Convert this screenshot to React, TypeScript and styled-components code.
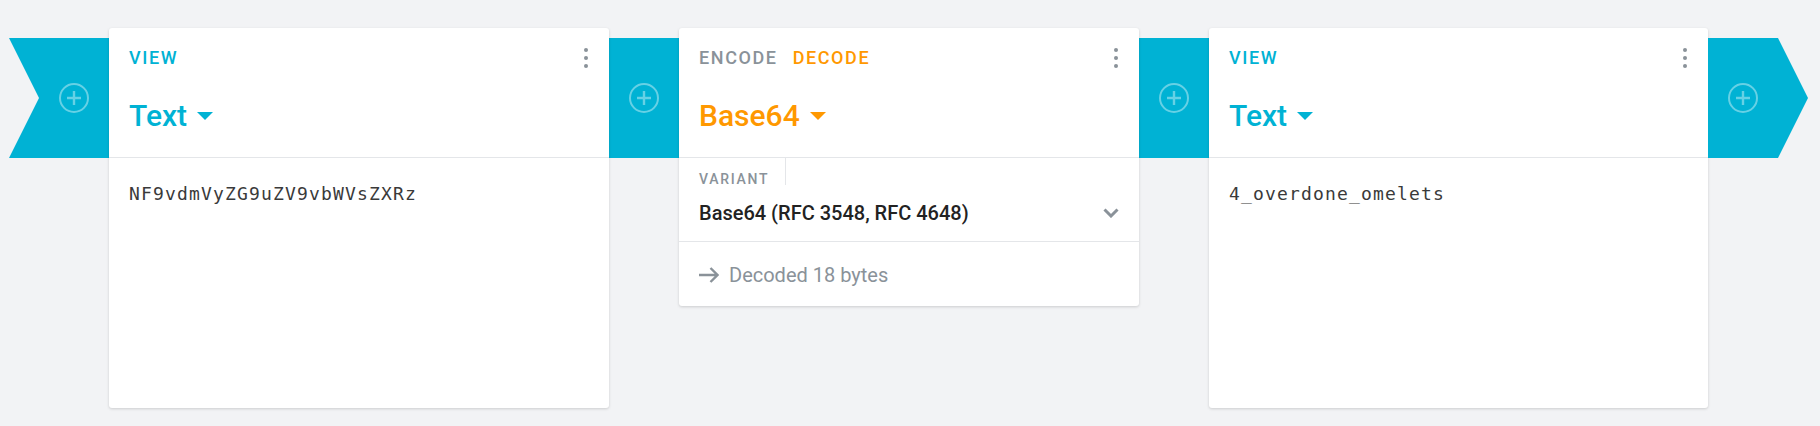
import styled, { createGlobalStyle } from 'styled-components';

const cyan = '#00b2d4';
const orange = '#ff9800';
const grey = '#8a9299';
const line = '#e4e6e9';

const GlobalStyle = createGlobalStyle`
  html, body {
    margin: 0;
    height: 100%;
    background: #f2f3f5;
    font-family: Roboto, "Liberation Sans", sans-serif;
    overflow: hidden;
  }
`;

function PlusIcon() {
  return (
    <svg width="32" height="32" viewBox="0 0 32 32" fill="none" stroke="#fff" strokeOpacity="0.4" strokeWidth="2" aria-hidden="true">
      <circle cx="16" cy="16" r="14" />
      <path d="M16 9v14M9 16h14" strokeWidth="2.4" />
    </svg>
  );
}

function MoreIcon() {
  return (
    <MoreButton aria-label="More">
      <span />
      <span />
      <span />
    </MoreButton>
  );
}

export default function App() {
  return (
    <>
      <GlobalStyle />
      <Pipeline>
        <RibbonStart>
          <PlusIcon />
        </RibbonStart>

        <Card $width={500} $height={380}>
          <CardHeader>
            <Tabs>
              <Tab $color={cyan}>VIEW</Tab>
            </Tabs>
            <Title $color={cyan}>
              Text <Caret $color={cyan} />
            </Title>
            <MoreIcon />
          </CardHeader>
          <Content>NF9vdmVyZG9uZV9vbWVsZXRz</Content>
        </Card>

        <Connector>
          <PlusIcon />
        </Connector>

        <Card $width={460}>
          <CardHeader>
            <Tabs>
              <Tab $color={grey}>ENCODE</Tab>
              <Tab $color={orange}>DECODE</Tab>
            </Tabs>
            <Title $color={orange}>
              Base64 <Caret $color={orange} />
            </Title>
            <MoreIcon />
          </CardHeader>
          <Field>
            <FieldLabel>VARIANT</FieldLabel>
            <FieldValue>
              Base64 (RFC 3548, RFC 4648)
              <svg width="16" height="10" viewBox="0 0 16 10" fill="none" stroke={grey} strokeWidth="3" aria-hidden="true">
                <path d="M1.5 1.5 8 8l6.5-6.5" />
              </svg>
            </FieldValue>
          </Field>
          <Status>
            <svg width="20" height="16" viewBox="0 0 20 16" fill="none" stroke={grey} strokeWidth="2.4" aria-hidden="true">
              <path d="M0 8h18M11.5 1l7 7-7 7" />
            </svg>
            Decoded 18 bytes
          </Status>
        </Card>

        <Connector>
          <PlusIcon />
        </Connector>

        <Card $width={499} $height={380}>
          <CardHeader>
            <Tabs>
              <Tab $color={cyan}>VIEW</Tab>
            </Tabs>
            <Title $color={cyan}>
              Text <Caret $color={cyan} />
            </Title>
            <MoreIcon />
          </CardHeader>
          <Content>4_overdone_omelets</Content>
        </Card>

        <RibbonEnd>
          <PlusIcon />
        </RibbonEnd>
      </Pipeline>
    </>
  );
}

const Pipeline = styled.div`
  display: flex;
  align-items: flex-start;
  padding: 28px 0 0 9px;
`;

const Connector = styled.div`
  flex: none;
  width: 70px;
  height: 120px;
  margin-top: 10px;
  background: ${cyan};
  display: flex;
  align-items: center;
  justify-content: center;
`;

const RibbonStart = styled(Connector)`
  width: 100px;
  padding-left: 30px;
  box-sizing: border-box;
  clip-path: polygon(0 0, 100% 0, 100% 100%, 0 100%, 30px 50%);
`;

const RibbonEnd = styled(Connector)`
  width: 100px;
  padding-right: 30px;
  box-sizing: border-box;
  clip-path: polygon(0 0, 70px 0, 100% 50%, 70px 100%, 0 100%);
`;

const Card = styled.section<{ $width: number; $height?: number }>`
  position: relative;
  flex: none;
  box-sizing: border-box;
  width: ${({ $width }) => $width}px;
  height: ${({ $height }) => ($height ? `${$height}px` : 'auto')};
  background: #fff;
  border-radius: 3px;
  box-shadow: 0 1px 3px rgba(0, 0, 0, 0.16);
`;

const CardHeader = styled.header`
  box-sizing: border-box;
  height: 130px;
  padding: 20px 20px 0;
  border-bottom: 1px solid ${line};
`;

const Tabs = styled.div`
  display: flex;
  gap: 15px;
`;

const Tab = styled.span<{ $color: string }>`
  font-size: 18px;
  line-height: 20px;
  font-weight: 500;
  letter-spacing: 1.6px;
  color: ${({ $color }) => $color};
`;

const Title = styled.div<{ $color: string }>`
  display: flex;
  align-items: center;
  gap: 10px;
  margin-top: 28px;
  font-size: 30px;
  line-height: 40px;
  font-weight: 500;
  color: ${({ $color }) => $color};
`;

const Caret = styled.span<{ $color: string }>`
  width: 0;
  height: 0;
  border-left: 8px solid transparent;
  border-right: 8px solid transparent;
  border-top: 8px solid ${({ $color }) => $color};
`;

const MoreButton = styled.button`
  position: absolute;
  top: 20px;
  right: 17px;
  width: 12px;
  padding: 0;
  border: none;
  background: none;
  display: flex;
  flex-direction: column;
  align-items: center;
  gap: 4px;

  span {
    width: 4px;
    height: 4px;
    border-radius: 50%;
    background: ${grey};
  }
`;

const Content = styled.div`
  padding: 24px 20px;
  font-family: "DejaVu Sans Mono", "Liberation Mono", monospace;
  font-size: 18px;
  line-height: 24px;
  letter-spacing: 1.16px;
  color: #3a3a3a;
`;

const Field = styled.div`
  padding: 0 20px;
  border-bottom: 1px solid ${line};
  height: 83px;
`;

const FieldLabel = styled.div`
  box-sizing: border-box;
  height: 27px;
  padding-top: 12px;
  border-right: 1px solid ${line};
  width: 87px;
  font-size: 14px;
  line-height: 18px;
  font-weight: 500;
  letter-spacing: 1.7px;
  color: ${grey};
`;

const FieldValue = styled.div`
  display: flex;
  align-items: center;
  justify-content: space-between;
  margin-top: 16px;
  font-size: 20px;
  line-height: 24px;
  font-weight: 500;
  color: #222;
`;

const Status = styled.div`
  display: flex;
  align-items: center;
  gap: 10px;
  height: 64px;
  padding: 2px 20px 0;
  box-sizing: border-box;
  font-size: 20px;
  color: ${grey};
`;
